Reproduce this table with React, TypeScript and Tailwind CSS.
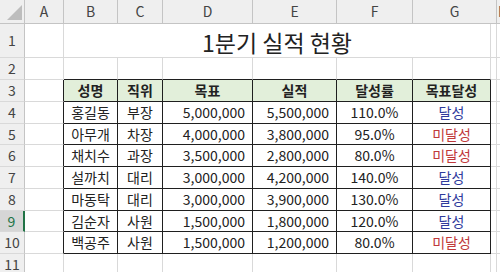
import React from 'react';

const font = { fontFamily: '"Noto Sans CJK KR", "Noto Sans", sans-serif' };

type Row = {
  name: string;
  rank: string;
  goal: string;
  actual: string;
  rate: string;
  ok: boolean;
  h: string;
};

const rows: Row[] = [
  { name: '홍길동', rank: '부장', goal: '5,000,000', actual: '5,500,000', rate: '110.0%', ok: true, h: 'h-[22px]' },
  { name: '아무개', rank: '차장', goal: '4,000,000', actual: '3,800,000', rate: '95.0%', ok: false, h: 'h-[21px]' },
  { name: '채치수', rank: '과장', goal: '3,500,000', actual: '2,800,000', rate: '80.0%', ok: false, h: 'h-[22px]' },
  { name: '설까치', rank: '대리', goal: '3,000,000', actual: '4,200,000', rate: '140.0%', ok: true, h: 'h-[22px]' },
  { name: '마동탁', rank: '대리', goal: '3,000,000', actual: '3,900,000', rate: '130.0%', ok: true, h: 'h-[22px]' },
  { name: '김순자', rank: '사원', goal: '1,500,000', actual: '1,800,000', rate: '120.0%', ok: true, h: 'h-[21px]' },
  { name: '백공주', rank: '사원', goal: '1,500,000', actual: '1,200,000', rate: '80.0%', ok: false, h: 'h-[22px]' },
];

// light gridline cell / black table cell
const grid = 'shrink-0 border-r border-b border-[#d9d9d9]';
const tcell = 'shrink-0 flex items-center border-r border-b border-[#1f1f1f] text-[14px] text-[#222]';

function RowHead({ n, selected }: { n: number; selected?: boolean }) {
  return (
    <div
      className={`w-[25px] shrink-0 flex items-center justify-center border-b border-b-[#d9d9d9] text-[14px] ${
        selected
          ? 'bg-[#d6d6d6] text-[#217346] border-r-2 border-r-[#217346]'
          : 'bg-[#efefef] text-[#444] border-r border-r-[#c4c4c4]'
      }`}
    >
      {n}
    </div>
  );
}

function Tail({ top }: { top?: boolean }) {
  return (
    <>
      <div className={`w-[6px] ${grid} ${top ? '' : ''}`} />
      <div className={`w-[103px] ${grid}`} />
    </>
  );
}

export default function App() {
  return (
    <div className="w-[500px] h-[272px] overflow-hidden bg-white" style={font}>
      {/* column headers */}
      <div className="flex h-[24px] bg-[#efefef] text-[14px] text-[#444]">
        <div className="w-[25px] shrink-0 relative border-r border-b border-[#c4c4c4]">
          <svg className="absolute left-0 top-0" width="24" height="23" viewBox="0 0 24 23">
            <polygon points="7,20 22,20 22,5" fill="#bdbdbd" />
          </svg>
        </div>
        {[
          ['A', 'w-[39px]'],
          ['B', 'w-[54px]'],
          ['C', 'w-[45px]'],
          ['D', 'w-[90px]'],
          ['E', 'w-[84px]'],
          ['F', 'w-[76px]'],
          ['G', 'w-[84px]'],
        ].map(([l, w]) => (
          <div key={l} className={`${w} shrink-0 flex items-center justify-center border-r border-b border-[#c4c4c4]`}>
            {l}
          </div>
        ))}
        <div className="w-[103px] shrink-0 flex items-center pl-[1px] border-b border-[#c4c4c4]">H</div>
      </div>

      {/* row 1: title */}
      <div className="flex h-[34px]">
        <RowHead n={1} />
        <div className={`w-[39px] ${grid}`} />
        <div className={`w-[427px] ${grid} flex items-end justify-center pb-[3px] text-[23px] leading-none text-[#222]`}>
          1분기 실적 현황
        </div>
        <div className={`w-[6px] ${grid}`} />
        <div className={`w-[103px] ${grid}`} />
      </div>

      {/* row 2 */}
      <div className="flex h-[22px]">
        <RowHead n={2} />
        <div className={`w-[39px] ${grid}`} />
        <div className="w-[54px] shrink-0 border-r border-r-[#d9d9d9] border-b border-b-[#1f1f1f]" />
        <div className="w-[45px] shrink-0 border-r border-r-[#d9d9d9] border-b border-b-[#1f1f1f]" />
        <div className="w-[90px] shrink-0 border-r border-r-[#d9d9d9] border-b border-b-[#1f1f1f]" />
        <div className="w-[84px] shrink-0 border-r border-r-[#d9d9d9] border-b border-b-[#1f1f1f]" />
        <div className="w-[76px] shrink-0 border-r border-r-[#d9d9d9] border-b border-b-[#1f1f1f]" />
        <div className="w-[78px] shrink-0 border-r border-r-[#d9d9d9] border-b border-b-[#1f1f1f]" />
        <Tail />
      </div>

      {/* row 3: table header */}
      <div className="flex h-[22px]">
        <RowHead n={3} />
        <div className="w-[39px] shrink-0 border-b border-b-[#d9d9d9] border-r border-r-[#1f1f1f]" />
        {[
          ['성명', 'w-[54px]'],
          ['직위', 'w-[45px]'],
          ['목표', 'w-[90px]'],
          ['실적', 'w-[84px]'],
          ['달성률', 'w-[76px]'],
          ['목표달성', 'w-[78px]'],
        ].map(([t, w]) => (
          <div key={t} className={`${w} ${tcell} justify-center bg-[#e2efda] font-bold`}>
            {t}
          </div>
        ))}
        <Tail />
      </div>

      {/* rows 4-10: data */}
      {rows.map((r, i) => (
        <div key={r.name} className={`flex ${r.h}`}>
          <RowHead n={i + 4} selected={i + 4 === 9} />
          <div className="w-[39px] shrink-0 border-b border-b-[#d9d9d9] border-r border-r-[#1f1f1f]" />
          <div className={`w-[54px] ${tcell} justify-center`}>{r.name}</div>
          <div className={`w-[45px] ${tcell} justify-center`}>{r.rank}</div>
          <div className={`w-[90px] ${tcell} justify-end pr-[7px]`}>{r.goal}</div>
          <div className={`w-[84px] ${tcell} justify-end pr-[7px]`}>{r.actual}</div>
          <div className={`w-[76px] ${tcell} justify-center`}>{r.rate}</div>
          <div className={`w-[78px] ${tcell} justify-center`}>
            <span className={r.ok ? 'text-[#2f3a9c]' : 'text-[#c0393b]'}>{r.ok ? '달성' : '미달성'}</span>
          </div>
          <Tail />
        </div>
      ))}

      {/* row 11 */}
      <div className="flex h-[22px]">
        <RowHead n={11} />
        <div className={`w-[39px] ${grid}`} />
        <div className={`w-[54px] ${grid}`} />
        <div className={`w-[45px] ${grid}`} />
        <div className={`w-[90px] ${grid}`} />
        <div className={`w-[84px] ${grid}`} />
        <div className={`w-[76px] ${grid}`} />
        <div className={`w-[78px] ${grid}`} />
        <Tail />
      </div>
    </div>
  );
}
